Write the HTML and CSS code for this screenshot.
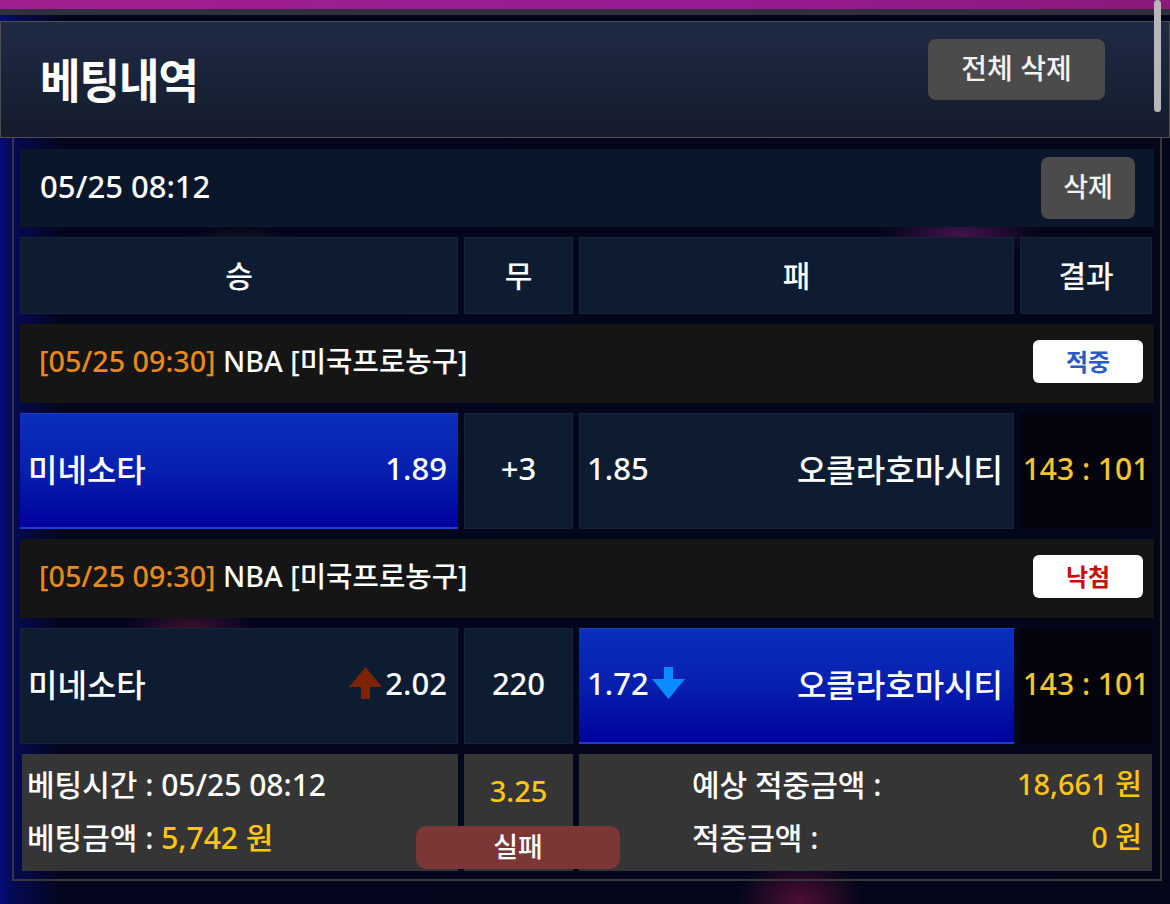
FILE: index.html
```html
<!DOCTYPE html>
<html lang="ko">
<head>
    <meta charset="UTF-8">
    <meta name="viewport" content="width=device-width, initial-scale=1.0">
    <title>베팅내역</title>
    <link rel="stylesheet" href="styles.css">
</head>
<body>
    <div class="top-strip"></div>
    <div class="scroll-thumb"></div>

    <div class="page-header">
        <h1>베팅내역</h1>
        <button class="btn-all">전체 삭제</button>
    </div>

    <div class="history">
        <div class="slip-head">
            <span class="slip-date">05/25 08:12</span>
            <button class="btn-del">삭제</button>
        </div>

        <div class="grid col-head">
            <div class="cell">승</div>
            <div class="cell">무</div>
            <div class="cell">패</div>
            <div class="cell">결과</div>
        </div>

        <div class="game-head">
            <span><span class="kick">[05/25 09:30]</span> NBA [미국프로농구]</span>
            <span class="badge hit">적중</span>
        </div>
        <div class="grid odds">
            <div class="cell team picked">
                <span>미네소타</span>
                <span class="rate">1.89</span>
            </div>
            <div class="cell mid">+3</div>
            <div class="cell team">
                <span class="rate">1.85</span>
                <span>오클라호마시티</span>
            </div>
            <div class="cell score">143 : 101</div>
        </div>

        <div class="game-head">
            <span><span class="kick">[05/25 09:30]</span> NBA [미국프로농구]</span>
            <span class="badge miss">낙첨</span>
        </div>
        <div class="grid odds">
            <div class="cell team">
                <span>미네소타</span>
                <span class="rate">
                    <svg class="arrow" width="33" height="32" viewBox="0 0 33 32"><polygon points="16.5,0 33,20 0,20" fill="#7a2400"/><rect x="12" y="19" width="9" height="13" fill="#7a2400"/></svg>2.02
                </span>
            </div>
            <div class="cell mid">220</div>
            <div class="cell team picked">
                <span class="rate">1.72<svg class="arrow" width="33" height="32" viewBox="0 0 33 32"><rect x="12" y="0" width="9" height="13" fill="#0a8cff"/><polygon points="0,12 33,12 16.5,32" fill="#0a8cff"/></svg></span>
                <span>오클라호마시티</span>
            </div>
            <div class="cell score">143 : 101</div>
        </div>

        <div class="grid summary">
            <div class="cell info">
                <div>베팅시간 : 05/25 08:12</div>
                <div>베팅금액 : <span class="gold">5,742 원</span></div>
            </div>
            <div class="cell total">
                <span class="gold">3.25</span>
                <span class="state">실패</span>
            </div>
            <div class="cell payout">
                <div class="pay-line"><span>예상 적중금액 :</span><span class="gold">18,661 원</span></div>
                <div class="pay-line"><span>적중금액 :</span><span class="gold">0 원</span></div>
            </div>
        </div>
    </div>
</body>
</html>
```

FILE: styles.css
```css
body {
    margin: 0;
    font-family: "Noto Sans", "Noto Sans CJK KR", sans-serif;
    font-weight: 500;
    color: #fff;
    background:
        radial-gradient(ellipse 120px 60px at 240px 270px, rgba(200, 150, 20, 0.35), transparent 70%),
        radial-gradient(ellipse 110px 40px at 960px 235px, rgba(190, 40, 170, 0.35), transparent 70%),
        radial-gradient(ellipse 90px 40px at 190px 630px, rgba(200, 40, 100, 0.3), transparent 70%),
        radial-gradient(ellipse 90px 60px at 800px 900px, rgba(210, 30, 90, 0.35), transparent 70%),
        linear-gradient(90deg, #060b78 0, #050a55 12px, #04061e 60px, #04061a 100%);
    min-height: 904px;
    overflow: hidden;
}
.top-strip {
    height: 9px;
    background: linear-gradient(90deg, #a0208f, #9a1a96 60%, #8a1a7a);
    border-bottom: 6px solid #30303c;
    margin-bottom: 6px;
}
.scroll-thumb {
    position: absolute;
    top: 0;
    left: 1154px;
    width: 7px;
    height: 112px;
    border-radius: 4px;
    background: #b8b8b8;
}
.page-header {
    height: 115px;
    border: 1px solid #4e4e52;
    background: linear-gradient(180deg, #1f2b45 0%, #182236 60%, #141b2b 100%);
    display: flex;
    align-items: center;
    justify-content: space-between;
    padding: 0 64px 0 39px;
}
h1 {
    margin: 0 0 4px 0;
    font-family: "Noto Sans CJK KR", sans-serif;
    font-size: 44px;
    font-weight: bold;
    letter-spacing: -1px;
    transform: scaleY(1.05);
}
button {
    font-family: inherit;
    font-weight: 500;
    color: #f2f2f2;
    background: #4b4b4b;
    border: none;
    border-radius: 8px;
    cursor: pointer;
}
.btn-all {
    width: 177px;
    height: 61px;
    margin-top: -20px;
    font-size: 28px;
    padding: 0 0 6px 0;
}
.history {
    margin: 0 8px 0 12px;
    border: 2px solid #38383c;
    border-top: none;
    padding: 11px 6px 8px 6px;
    display: flex;
    flex-direction: column;
    gap: 10px;
}
.slip-head {
    height: 78px;
    background: #0a172b;
    display: flex;
    align-items: center;
    justify-content: space-between;
    padding: 0 19px 0 20px;
}
.slip-date {
    font-size: 31px;
    padding-bottom: 4px;
}
.btn-del {
    width: 94px;
    height: 62px;
    font-size: 27px;
    padding: 0 0 6px 0;
}
.grid {
    display: grid;
    grid-template-columns: 438px 109px 435px 132px;
    column-gap: 6px;
}
.cell {
    background: #0e1c32;
    box-shadow: inset 0 0 0 1px #17253b;
    display: flex;
    align-items: center;
    justify-content: center;
    font-size: 31px;
}
.col-head {
    height: 77px;
}
.col-head .cell {
    font-size: 30px;
    padding-bottom: 4px;
}
.game-head {
    height: 79px;
    background: #151515;
    display: flex;
    align-items: center;
    justify-content: space-between;
    padding: 0 11px 0 19px;
    font-size: 28.7px;
}
.game-head > span:first-child {
    padding-bottom: 8px;
}
.kick {
    color: #e8891c;
}
.badge {
    width: 110px;
    height: 43px;
    margin-bottom: 4px;
    background: #fff;
    border-radius: 6px;
    display: flex;
    align-items: center;
    justify-content: center;
    font-size: 24px;
    font-weight: bold;
    padding-bottom: 3px;
    box-sizing: border-box;
}
.hit {
    color: #2a5bc4;
}
.miss {
    color: #c80f0f;
}
.odds {
    height: 116px;
}
.team {
    justify-content: space-between;
    padding: 0 11px 6px 8px;
    font-size: 32px;
}
.team .rate {
    display: flex;
    align-items: center;
    font-size: 31px;
}
.arrow {
    margin: 0 3px;
}
.picked {
    background: linear-gradient(180deg, #0a30bb 0%, #061fae 50%, #00009c 100%);
    box-shadow: inset 0 -2px 0 #1d3fd0, inset 0 1px 0 #1b40c8;
}
.mid {
    padding-bottom: 6px;
}
.score {
    background: #03030e;
    box-shadow: none;
    color: #f5c531;
    font-size: 30px;
    padding-bottom: 6px;
    white-space: nowrap;
}
.summary {
    height: 117px;
}
.summary .cell {
    background: #353535;
    box-shadow: none;
    font-size: 30px;
}
.gold {
    color: #ffc510;
}
.info {
    flex-direction: column;
    align-items: flex-start;
    justify-content: flex-start;
    gap: 9px;
    padding: 7px 0 0 5px;
    margin-left: 2px;
}
.total {
    position: relative;
    align-items: flex-start;
    padding-top: 17px;
}
.total .gold {
    font-size: 29px;
}
.state {
    position: absolute;
    left: -48px;
    bottom: 2px;
    width: 204px;
    height: 43px;
    border-radius: 10px;
    background: #7b3636;
    color: #fff;
    font-size: 27px;
    display: flex;
    align-items: center;
    justify-content: center;
    padding-bottom: 4px;
    box-sizing: border-box;
}
.payout {
    grid-column: 3 / 5;
    flex-direction: column;
    align-items: stretch;
    justify-content: flex-start;
    gap: 9px;
    padding: 7px 10px 0 113px;
}
.pay-line {
    display: flex;
    justify-content: space-between;
}
.pay-line .gold {
    font-size: 29px;
}
```
